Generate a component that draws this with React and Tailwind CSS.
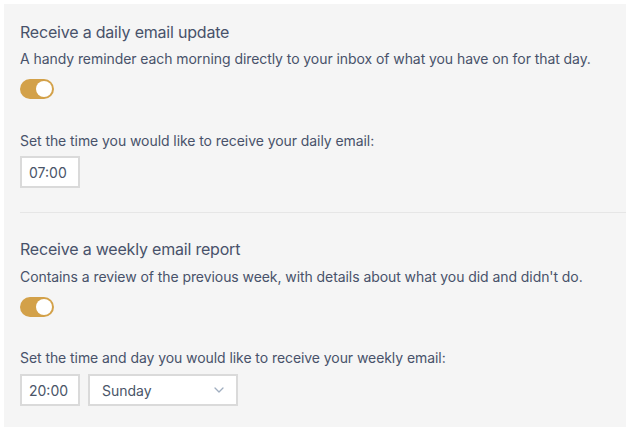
import React from "react";

function Toggle() {
  return (
    <div className="relative w-[34px] h-[20px] rounded-full bg-[#d3a149]">
      <div className="absolute right-[2px] top-[2px] w-[16px] h-[16px] rounded-full bg-white" />
    </div>
  );
}

function Box({ children, className = "" }) {
  return (
    <div
      className={
        "h-[32px] border-2 border-[#dadada] bg-white flex items-center text-[14px] text-[#4a5568] " +
        className
      }
    >
      {children}
    </div>
  );
}

export default function App() {
  return (
    <div className="w-[626px] h-[431px] bg-white pt-[4px] pl-[4px] overflow-hidden" style={{ fontFamily: "Inter, 'Noto Sans', sans-serif" }}>
      <div className="h-[423px] bg-[#f5f5f5] pt-[16px] pl-[16px] text-[#48526a]">
        <div className="text-[16px] leading-[24px] tracking-[-0.2px]">Receive a daily email update</div>
        <div className="mt-[5px] text-[14px] leading-[20px] tracking-[-0.07px]">
          A handy reminder each morning directly to your inbox of what you have on for that day.
        </div>
        <div className="mt-[10px]">
          <Toggle />
        </div>
        <div className="mt-[32px] text-[14px] leading-[20px] tracking-[-0.07px]">
          Set the time you would like to receive your daily email:
        </div>
        <div className="mt-[5px] flex">
          <Box className="w-[60px] pl-[7px]">07:00</Box>
        </div>
        <div className="mt-[24px] h-px bg-[#e6e6e6]" />
        <div className="mt-[24px] text-[16px] leading-[24px] tracking-[-0.2px]">Receive a weekly email report</div>
        <div className="mt-[6px] text-[14px] leading-[20px] tracking-[-0.07px]">
          Contains a review of the previous week, with details about what you did and didn't do.
        </div>
        <div className="mt-[10px]">
          <Toggle />
        </div>
        <div className="mt-[31px] text-[14px] leading-[20px] tracking-[-0.07px]">
          Set the time and day you would like to receive your weekly email:
        </div>
        <div className="mt-[6px] flex gap-[8px]">
          <Box className="w-[60px] pl-[7px]">20:00</Box>
          <Box className="w-[150px] pl-[12px] pr-[12px] justify-between">
            <span>Sunday</span>
            <svg width="10" height="6" viewBox="0 0 10 6" fill="none">
              <path d="M1 1l4 4 4-4" stroke="#a0aec0" strokeWidth="1.3" strokeLinecap="round" strokeLinejoin="round" />
            </svg>
          </Box>
        </div>
      </div>
    </div>
  );
}
